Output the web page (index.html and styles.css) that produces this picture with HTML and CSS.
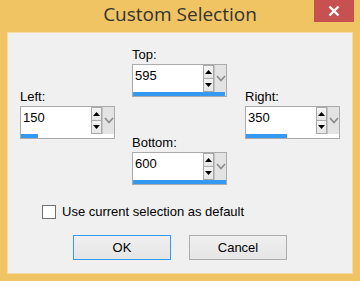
FILE: index.html
```html
<!DOCTYPE html>
<html>
<head>
<meta charset="utf-8">
<title>Custom Selection</title>
<link rel="stylesheet" href="styles.css">
</head>
<body>
<div class="window">
  <div class="titlebar">
    <span class="title">Custom Selection</span>
    <div class="close">
      <svg width="12" height="12" viewBox="0 0 12 12"><path d="M1.5 1.5 L10.5 10.5 M10.5 1.5 L1.5 10.5" stroke="#fff" stroke-width="2.4" fill="none"/></svg>
    </div>
  </div>
  <div class="client">
    <div class="fields">
      <div class="col side">
        <div class="group">
          <div class="label">Left:</div>
          <div class="field">
            <div class="row">
              <div class="value">150</div>
              <div class="spin">
                <div class="btn"><svg width="9" height="6" viewBox="0 0 9 6"><path d="M4.5 1 L8 5 L1 5 Z" fill="#000"/></svg></div>
                <div class="btn"><svg width="9" height="6" viewBox="0 0 9 6"><path d="M1 1 L8 1 L4.5 5 Z" fill="#000"/></svg></div>
              </div>
              <div class="drop"><svg width="10" height="7" viewBox="0 0 10 7"><path d="M1 1 L5 5.5 L9 1" stroke="#8a8a8a" stroke-width="1.6" fill="none"/></svg></div>
            </div>
            <div class="track"><div class="bar" style="width:18.75%"></div></div>
          </div>
        </div>
      </div>
      <div class="col middle">
        <div class="group">
          <div class="label">Top:</div>
          <div class="field">
            <div class="row">
              <div class="value">595</div>
              <div class="spin">
                <div class="btn"><svg width="9" height="6" viewBox="0 0 9 6"><path d="M4.5 1 L8 5 L1 5 Z" fill="#000"/></svg></div>
                <div class="btn"><svg width="9" height="6" viewBox="0 0 9 6"><path d="M1 1 L8 1 L4.5 5 Z" fill="#000"/></svg></div>
              </div>
              <div class="drop"><svg width="10" height="7" viewBox="0 0 10 7"><path d="M1 1 L5 5.5 L9 1" stroke="#8a8a8a" stroke-width="1.6" fill="none"/></svg></div>
            </div>
            <div class="track"><div class="bar" style="width:99.2%"></div></div>
          </div>
        </div>
        <div class="group bottom">
          <div class="label">Bottom:</div>
          <div class="field">
            <div class="row">
              <div class="value">600</div>
              <div class="spin">
                <div class="btn"><svg width="9" height="6" viewBox="0 0 9 6"><path d="M4.5 1 L8 5 L1 5 Z" fill="#000"/></svg></div>
                <div class="btn"><svg width="9" height="6" viewBox="0 0 9 6"><path d="M1 1 L8 1 L4.5 5 Z" fill="#000"/></svg></div>
              </div>
              <div class="drop"><svg width="10" height="7" viewBox="0 0 10 7"><path d="M1 1 L5 5.5 L9 1" stroke="#8a8a8a" stroke-width="1.6" fill="none"/></svg></div>
            </div>
            <div class="track"><div class="bar" style="width:100%"></div></div>
          </div>
        </div>
      </div>
      <div class="col side right">
        <div class="group">
          <div class="label">Right:</div>
          <div class="field">
            <div class="row">
              <div class="value">350</div>
              <div class="spin">
                <div class="btn"><svg width="9" height="6" viewBox="0 0 9 6"><path d="M4.5 1 L8 5 L1 5 Z" fill="#000"/></svg></div>
                <div class="btn"><svg width="9" height="6" viewBox="0 0 9 6"><path d="M1 1 L8 1 L4.5 5 Z" fill="#000"/></svg></div>
              </div>
              <div class="drop"><svg width="10" height="7" viewBox="0 0 10 7"><path d="M1 1 L5 5.5 L9 1" stroke="#8a8a8a" stroke-width="1.6" fill="none"/></svg></div>
            </div>
            <div class="track"><div class="bar" style="width:43.75%"></div></div>
          </div>
        </div>
      </div>
    </div>
    <div class="option">
      <span class="check"></span>
      <span>Use current selection as default</span>
    </div>
    <div class="buttons">
      <div class="button default">OK</div>
      <div class="button">Cancel</div>
    </div>
  </div>
</div>
</body>
</html>
```

FILE: styles.css
```css
* {
  box-sizing: border-box;
}

body {
  margin: 0;
  background: #f0c462;
  font-family: 'Liberation Sans', Arial, sans-serif;
  font-size: 13px;
  color: #000;
}

.window {
  width: 360px;
  height: 281px;
}

.titlebar {
  position: relative;
  height: 32px;
  text-align: center;
}

.title {
  font-family: 'Open Sans', sans-serif;
  font-size: 19px;
  line-height: 29px;
  color: #333;
}

/* sits over the title bar */
.close {
  position: absolute;
  top: 0;
  right: 6px;
  width: 40px;
  height: 22px;
  background: #c75050;
  display: flex;
  align-items: center;
  justify-content: center;
}

.client {
  margin: 0 7px;
  height: 242px;
  background: #f0f0f0;
  border: 1px solid #f3dca6;
  padding: 14px 0 0 12px;
}

.fields {
  display: flex;
  gap: 17px;
}

.col {
  width: 95px;
  display: flex;
  flex-direction: column;
}

.side {
  margin-top: 42px;
}

.right {
  margin-left: 1px;
}

.group.bottom {
  margin-top: 38px;
}

.label {
  line-height: 15px;
  height: 15px;
  margin-bottom: 2px;
}

.field {
  border: 1px solid #ababab;
  background: #fff;
}

.row {
  display: flex;
  height: 27px;
}

.value {
  flex: 1;
  padding: 3px 0 0 2px;
  line-height: 15px;
}

.spin {
  width: 11px;
  display: flex;
  flex-direction: column;
}

.btn {
  flex: 1;
  border: 1px solid #a9a9a9;
  background: linear-gradient(#f4f4f4, #e6e6e6);
  display: flex;
  align-items: center;
  justify-content: center;
}

.btn + .btn {
  border-top: 0;
}

.drop {
  width: 12px;
  background: #e3e3e3;
  border-left: 1px solid #c4c4c4;
  display: flex;
  align-items: center;
  justify-content: center;
}

.track {
  height: 4px;
  background: #fff;
}

.bar {
  height: 4px;
  background: #3399f3;
}

.option {
  display: flex;
  align-items: center;
  height: 15px;
  line-height: 15px;
  margin: 19px 0 0 22px;
  gap: 6px;
}

.check {
  width: 14px;
  height: 14px;
  border: 1px solid #707070;
  background: #fff;
}

.buttons {
  display: flex;
  gap: 18px;
  margin: 16px 0 0 53px;
}

.button {
  width: 98px;
  height: 25px;
  line-height: 23px;
  text-align: center;
  border: 1px solid #acacac;
  background: linear-gradient(#f0f0f0, #e5e5e5);
}

.button.default {
  border-color: #3399ff;
}
```
